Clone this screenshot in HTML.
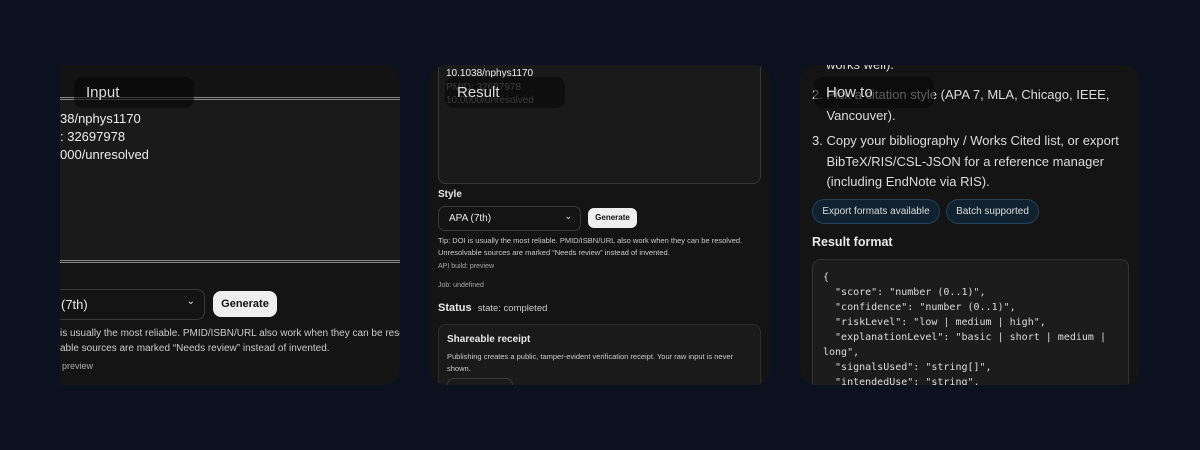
<!DOCTYPE html>
<html><head><meta charset="utf-8"><style>
*{margin:0;padding:0;box-sizing:border-box}
body{width:1200px;height:450px;background:#0c1120;font-family:"Liberation Sans",sans-serif;position:relative;overflow:hidden;color:#e8e8e8}
.card{position:absolute;top:65px;height:320px;background:#141414;border-radius:16px;overflow:hidden}
.a{position:absolute;white-space:nowrap}
.pill{position:absolute;background:rgba(6,6,6,0.6);border-radius:9px;width:120px;height:31px;color:#ddd;font-size:15px;padding:7px 12px}
.mono{font-family:"DejaVu Sans Mono","Liberation Mono",monospace}
</style></head><body>

<div class="card" style="left:60px;width:340px;border-radius:0 16px 16px 0">
  <div class="a" style="left:0;top:0;width:340px;height:32px;background:#131313"></div>
  <div class="a" style="left:0;top:32px;width:340px;height:166px;background:#1a1a1a;border-top:3px double #888;border-bottom:3px double #888"></div>
  <div class="a" style="left:0;top:45px;font-size:13px;line-height:18px;color:#eee">38/nphys1170<br>: 32697978<br>000/unresolved</div>
  <div class="a" style="left:-10px;top:224px;width:155px;height:31px;border:1px solid #3a3a3a;border-radius:8px;background:#141414;font-size:13px;padding:7px 0 0 10px">(7th)<span style="position:absolute;right:9px;top:6px;font-size:10px">&#8964;</span></div>
  <div class="a" style="left:153px;top:226px;width:64px;height:26px;background:#eee;border-radius:8px;color:#111;font-size:11px;font-weight:bold;text-align:center;line-height:26px">Generate</div>
  <div class="a" style="left:0;top:261px;font-size:10px;line-height:15px;color:#ccc">is usually the most reliable. PMID/ISBN/URL also work when they can be resolv<br>able sources are marked “Needs review” instead of invented.</div>
  <div class="a" style="left:2px;top:296px;font-size:9px;color:#aaa">preview</div>
</div>
<div class="pill" style="left:74px;top:77px">Input</div>

<div class="card" style="left:430px;width:340px">
  <div class="a" style="left:8px;top:-10px;width:323px;height:129px;border:1px solid #3a3a3a;border-radius:8px;background:#1a1a1a"></div>
  <div class="a" style="left:16px;top:2px;font-size:10px;line-height:13.5px;color:#eee">10.1038/nphys1170<br><span style="color:#888">PMID: 32697978<br>10.0000/unresolved</span></div>
  <div class="a" style="left:8px;top:124px;font-size:10px;font-weight:bold">Style</div>
  <div class="a" style="left:8px;top:141px;width:143px;height:25px;border:1px solid #3a3a3a;border-radius:7px;font-size:10px;padding:6px 0 0 10px">APA (7th)<span style="position:absolute;right:8px;top:4px;font-size:9px">&#8964;</span></div>
  <div class="a" style="left:158px;top:143px;width:49px;height:20px;background:#eee;border-radius:6px;color:#111;font-size:8px;font-weight:bold;text-align:center;line-height:20px">Generate</div>
  <div class="a" style="left:8px;top:170px;font-size:7.5px;line-height:11.5px;color:#ccc">Tip: DOI is usually the most reliable. PMID/ISBN/URL also work when they can be resolved.<br>Unresolvable sources are marked “Needs review” instead of invented.</div>
  <div class="a" style="left:8px;top:198px;font-size:7px;color:#aaa">API build: preview</div>
  <div class="a" style="left:8px;top:217px;font-size:7px;color:#aaa">Job: undefined</div>
  <div class="a" style="left:8px;top:237px;font-size:11px;font-weight:bold">Status <span style="font-weight:normal;font-size:9.5px;color:#ccc;margin-left:3px">state: completed</span></div>
  <div class="a" style="left:8px;top:259px;width:323px;height:80px;border:1px solid #2e2e2e;border-radius:8px;background:#1a1a1a"></div>
  <div class="a" style="left:17px;top:269px;font-size:10px;font-weight:bold">Shareable receipt</div>
  <div class="a" style="left:17px;top:286px;font-size:7.5px;line-height:12px;color:#ccc">Publishing creates a public, tamper-evident verification receipt. Your raw input is never<br>shown.</div>
  <div class="a" style="left:17px;top:313px;width:66px;height:20px;border:1px solid #3a3a3a;border-radius:7px"></div>
</div>
<div class="pill" style="left:445px;top:77px">Result</div>

<div class="card" style="left:800px;width:340px">
  <div class="a" style="left:26px;top:-8px;font-size:13px;color:#ddd">works well).</div>
  <div class="a" style="left:12px;top:20px;font-size:13px;line-height:20.5px;color:#ddd">2. Pick a citation style (APA 7, MLA, Chicago, IEEE,<br>&nbsp;&nbsp;&nbsp;&nbsp;Vancouver).</div>
  <div class="a" style="left:12px;top:66px;font-size:13px;line-height:20.5px;color:#ddd">3. Copy your bibliography / Works Cited list, or export<br>&nbsp;&nbsp;&nbsp;&nbsp;BibTeX/RIS/CSL-JSON for a reference manager<br>&nbsp;&nbsp;&nbsp;&nbsp;(including EndNote via RIS).</div>
  <div class="a" style="left:12px;top:134px;width:128px;height:25px;border:1px solid #24425a;background:#10222f;border-radius:13px;font-size:10px;line-height:23px;text-align:center;color:#ddd">Export formats available</div>
  <div class="a" style="left:146px;top:134px;width:93px;height:25px;border:1px solid #24425a;background:#10222f;border-radius:13px;font-size:10px;line-height:23px;text-align:center;color:#ddd">Batch supported</div>
  <div class="a" style="left:12px;top:170px;font-size:12.5px;font-weight:bold">Result format</div>
  <div class="a mono" style="left:12px;top:194px;width:317px;height:160px;border:1px solid #333;background:#1c1c1c;border-radius:8px;padding:10px 10px;font-size:10px;line-height:15px;color:#ddd;white-space:pre">{
  "score": "number (0..1)",
  "confidence": "number (0..1)",
  "riskLevel": "low | medium | high",
  "explanationLevel": "basic | short | medium |
long",
  "signalsUsed": "string[]",
  "intendedUse": "string",</div>
</div>
<div class="pill" style="left:814px;top:77px">How to</div>

</body></html>
